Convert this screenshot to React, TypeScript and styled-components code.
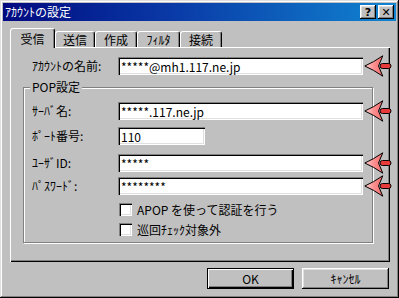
import { createGlobalStyle, styled } from 'styled-components';

const GlobalStyle = createGlobalStyle`
    html, body {
        margin: 0;
        padding: 0;
        overflow: hidden;
        background: #c0c0c0;
    }
    * {
        box-sizing: border-box;
    }
`;

const FONT = `"Noto Sans CJK JP", "Noto Sans", sans-serif`;

const Window = styled.div`
    width: 399px;
    height: 298px;
    padding: 3px;
    background: #c0c0c0;
    font-family: ${FONT};
    font-size: 12px;
    color: #000;
    box-shadow: inset -1px -1px #000, inset 1px 1px #dfdfdf, inset -2px -2px #808080, inset 2px 2px #fff;
    display: flex;
    flex-direction: column;
`;

const TitleBar = styled.div`
    height: 18px;
    display: flex;
    align-items: center;
    justify-content: space-between;
    padding: 0 2px 0 2px;
    background: linear-gradient(90deg, #000a80 0%, #0a3ca8 45%, #1084d0 100%);
    color: #fff;
    line-height: 14px;
`;

const TitleButtons = styled.div`
    display: flex;
    gap: 2px;
`;

const TitleButton = styled.div`
    width: 16px;
    height: 14px;
    display: grid;
    place-items: center;
    background: #c0c0c0;
    color: #000;
    font-family: "DejaVu Sans", sans-serif;
    font-weight: 700;
    font-size: 11px;
    line-height: 11px;
    box-shadow: inset -1px -1px #000, inset 1px 1px #fff, inset -2px -2px #808080, inset 2px 2px #dfdfdf;
`;

const TabStrip = styled.div`
    display: flex;
    align-items: flex-end;
    height: 20px;
    margin: 7px 0 0 7px;
    position: relative;
    z-index: 1;
`;

const Tab = styled.div<{ $active?: boolean; $w: number }>`
    width: ${p => p.$w}px;
    height: ${p => (p.$active ? 20 : 16)}px;
    margin-bottom: ${p => (p.$active ? 0 : 1)}px;
    background: #c0c0c0;
    border-top: 1px solid #fff;
    border-left: 1px solid #fff;
    border-right: 1px solid #000;
    border-radius: 3px 3px 0 0;
    box-shadow: inset -1px 0 #808080;
    display: flex;
    align-items: center;
    justify-content: center;
    padding-top: ${p => (p.$active ? 0 : 1)}px;
    line-height: 12px;
`;

const Panel = styled.div`
    width: 380px;
    height: 215px;
    margin: -1px 0 0 7px;
    padding: 10px 0 0 13px;
    box-shadow: inset 1px 1px #fff, inset -1px -1px #000, inset -2px -2px #808080;
`;

const Row = styled.div<{ $mt?: number; $pl?: number }>`
    display: flex;
    align-items: center;
    height: 18px;
    margin-top: ${p => p.$mt ?? 0}px;
    padding-left: ${p => p.$pl ?? 0}px;
`;

const Label = styled.span`
    width: 86px;
    line-height: 12px;
    white-space: nowrap;
`;

const Field = styled.div<{ $w: number }>`
    position: relative;
    width: ${p => p.$w}px;
    height: 18px;
`;

const TextBox = styled.input`
    width: 100%;
    height: 100%;
    border: none;
    margin: 0;
    padding: 1px 0 0 3px;
    background: #fff;
    font-family: ${FONT};
    font-size: 12px;
    color: #000;
    outline: none;
    box-shadow: inset 1px 1px #808080, inset 2px 2px #000, inset -1px -1px #fff, inset -2px -2px #dfdfdf;
`;

const Marker = styled.svg`
    position: absolute;
    left: calc(100% + 1px);
    top: 50%;
    margin-top: -11px;
    width: 28px;
    height: 22px;
    z-index: 2;
`;

const Group = styled.div`
    position: relative;
    width: 350px;
    height: 156px;
    margin-top: 12px;
    padding: 14px 0 0 8px;
    border: 1px solid #808080;
    box-shadow: inset 1px 1px #fff, 1px 1px #fff;
`;

const Legend = styled.span`
    position: absolute;
    top: -7px;
    left: 6px;
    padding: 0 2px;
    background: #c0c0c0;
    line-height: 12px;
`;

const CheckRow = styled.label<{ $mt: number }>`
    display: flex;
    align-items: center;
    gap: 5px;
    height: 13px;
    margin-top: ${p => p.$mt}px;
    padding-left: 87px;
    line-height: 12px;
    white-space: nowrap;
`;

const CheckBox = styled.span`
    width: 13px;
    height: 13px;
    flex: none;
    background: #fff;
    box-shadow: inset 1px 1px #808080, inset 2px 2px #000, inset -1px -1px #fff, inset -2px -2px #dfdfdf;
`;

const ButtonBar = styled.div`
    display: flex;
    justify-content: flex-end;
    gap: 8px;
    margin-top: 6px;
    padding-right: 7px;
`;

const Button = styled.button<{ $default?: boolean }>`
    width: 87px;
    height: 21px;
    padding: 0;
    border: none;
    background: #c0c0c0;
    font-family: ${FONT};
    font-size: 12px;
    color: #000;
    line-height: 12px;
    box-shadow: ${p =>
        p.$default
            ? 'inset 0 0 0 1px #000, inset 2px 2px #fff, inset -2px -2px #000, inset -3px -3px #808080'
            : 'inset -1px -1px #000, inset 1px 1px #fff, inset -2px -2px #808080, inset 2px 2px #dfdfdf'};
`;

function Arrow() {
    return (
        <Marker viewBox="0 0 28 22">
            <defs>
                <linearGradient id="arrowFill" x1="0" y1="0" x2="1" y2="0">
                    <stop offset="0" stopColor="#ffd0d0" />
                    <stop offset="0.5" stopColor="#ff9090" />
                    <stop offset="1" stopColor="#f06a6a" />
                </linearGradient>
            </defs>
            <path
                d="M0.8 11 Q9 7.5 18.8 0.8 L14.5 11 L18.8 21.2 Q9 14.5 0.8 11 Z"
                fill="url(#arrowFill)"
                stroke="#000"
                strokeWidth="1"
                strokeLinejoin="round"
            />
            <rect x="16" y="8.5" width="11" height="5" rx="2.5" fill="#e83a3a" stroke="#000" strokeWidth="1" />
        </Marker>
    );
}

const tabs = [
    { name: '受信', w: 45 },
    { name: '送信', w: 40 },
    { name: '作成', w: 42 },
    { name: 'ﾌｨﾙﾀ', w: 43 },
    { name: '接続', w: 42 },
];

export default function App() {
    return (
        <>
            <GlobalStyle />
            <Window>
                <TitleBar>
                    <span>ｱｶｳﾝﾄの設定</span>
                    <TitleButtons>
                        <TitleButton>?</TitleButton>
                        <TitleButton>✕</TitleButton>
                    </TitleButtons>
                </TitleBar>

                <TabStrip>
                    {tabs.map((t, i) => (
                        <Tab key={t.name} $w={t.w} $active={i === 0}>{t.name}</Tab>
                    ))}
                </TabStrip>

                <Panel>
                    <Row $pl={9}>
                        <Label>ｱｶｳﾝﾄの名前:</Label>
                        <Field $w={245}>
                            <TextBox readOnly value="*****@mh1.117.ne.jp" />
                            <Arrow />
                        </Field>
                    </Row>

                    <Group>
                        <Legend>POP設定</Legend>
                        <Row>
                            <Label>ｻｰﾊﾞ名:</Label>
                            <Field $w={245}>
                                <TextBox readOnly value="*****.117.ne.jp" />
                                <Arrow />
                            </Field>
                        </Row>
                        <Row $mt={7}>
                            <Label>ﾎﾟｰﾄ番号:</Label>
                            <Field $w={87}>
                                <TextBox readOnly value="110" />
                            </Field>
                        </Row>
                        <Row $mt={9}>
                            <Label>ﾕｰｻﾞID:</Label>
                            <Field $w={245}>
                                <TextBox readOnly value="*****" />
                                <Arrow />
                            </Field>
                        </Row>
                        <Row $mt={5}>
                            <Label>ﾊﾟｽﾜｰﾄﾞ:</Label>
                            <Field $w={245}>
                                <TextBox readOnly value="********" />
                                <Arrow />
                            </Field>
                        </Row>
                        <CheckRow $mt={8}>
                            <CheckBox />
                            APOP を使って認証を行う
                        </CheckRow>
                        <CheckRow $mt={7}>
                            <CheckBox />
                            巡回ﾁｪｯｸ対象外
                        </CheckRow>
                    </Group>
                </Panel>

                <ButtonBar>
                    <Button $default>OK</Button>
                    <Button>ｷｬﾝｾﾙ</Button>
                </ButtonBar>
            </Window>
        </>
    );
}
